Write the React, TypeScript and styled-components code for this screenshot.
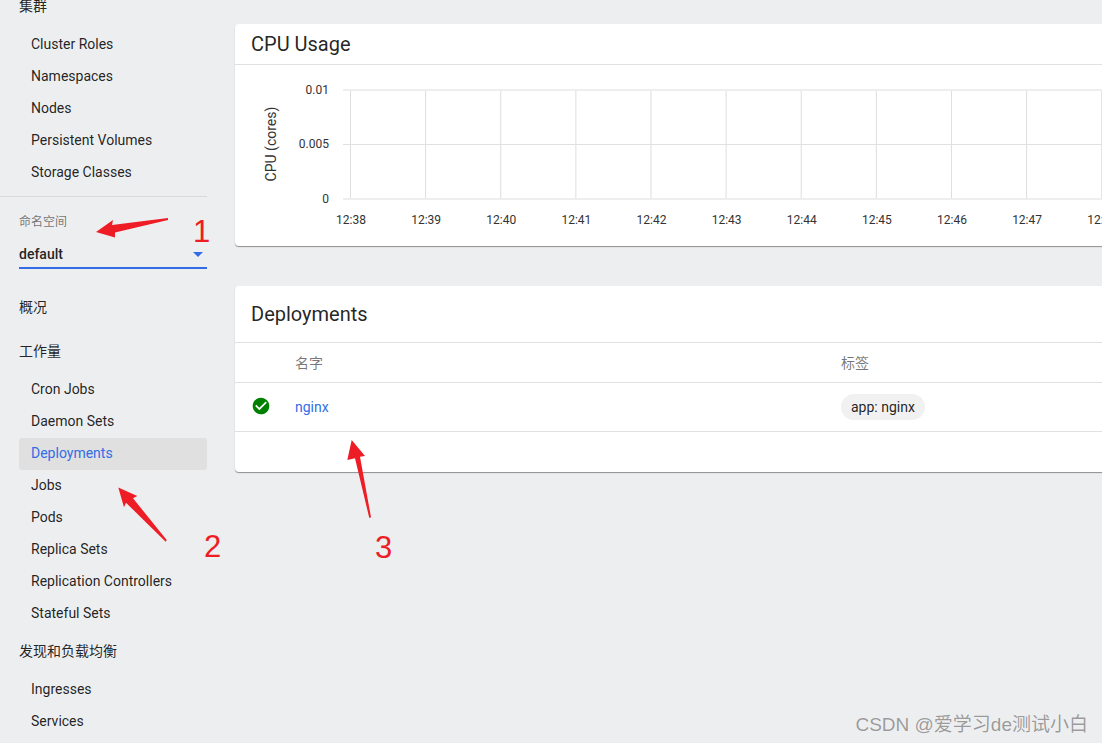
import styled, { createGlobalStyle } from "styled-components";

//style
const GlobalStyle = createGlobalStyle`
  html, body {
    margin: 0;
    height: 100%;
    overflow: hidden;
    background-color: #edeef0;
  }
  body {
    font-family: Roboto, "Noto Sans CJK SC", sans-serif;
    font-size: 14px;
    color: rgba(0, 0, 0, 0.87);
  }
`;
const Page = styled.div`
  position: relative;
  display: flex;
  width: 1102px;
  height: 743px;
  overflow: hidden;
`;
const Sidebar = styled.nav`
  flex: 0 0 207px;
  margin-top: -15px;
`;
const SectionTitle = styled.div`
  display: flex;
  align-items: center;
  height: 40px;
  padding: 0 0 4px 19px;
`;
const NavList = styled.ul`
  list-style: none;
  margin: 0;
  padding: 0 0 0 19px;
`;
const NavItem = styled.li<{ $active?: boolean }>`
  display: flex;
  align-items: center;
  height: 30px;
  padding: 0 0 2px 12px;
  border-radius: 3px;
  background-color: ${props => (props.$active ? "#e0e0e0" : "transparent")};
  color: ${props => (props.$active ? "#326de6" : "inherit")};
`;
const Divider = styled.hr`
  margin: 7px 0 0;
  border: none;
  border-top: 1px solid #d9d9d9;
`;
const NamespaceBox = styled.div`
  margin-left: 19px;
  padding-top: 17px;
`;
const NamespaceLabel = styled.div`
  font-size: 12px;
  line-height: 16px;
  color: rgba(0, 0, 0, 0.54);
`;
const NamespaceSelect = styled.div`
  display: flex;
  align-items: center;
  justify-content: space-between;
  height: 27px;
  margin-top: 10px;
  margin-bottom: 17px;
  padding-right: 4px;
  border-bottom: 2px solid #326de6;
  font-weight: 500;
`;
const Caret = styled.span`
  width: 0;
  height: 0;
  margin-top: 2px;
  border-left: 5.5px solid transparent;
  border-right: 5.5px solid transparent;
  border-top: 5.5px solid #326de6;
`;
const Main = styled.main`
  flex: 1;
  min-width: 0;
  padding: 24px 0 0 28px;
`;
const Card = styled.section`
  width: calc(100% + 8px);
  margin-bottom: 40px;
  background-color: #fff;
  border-radius: 4px;
  box-shadow: 0 1px 1px rgba(0, 0, 0, 0.4);
  overflow: hidden;
`;
const CardHeader = styled.header<{ $height: number }>`
  display: flex;
  align-items: center;
  height: ${props => props.$height}px;
  padding-left: 16px;
  font-size: 20px;
  border-bottom: 1px solid #e0e0e0;
`;
const Chart = styled.svg`
  display: block;
  font-family: Roboto, sans-serif;
  font-size: 12px;
`;
const TableRow = styled.div<{ $height: number }>`
  display: grid;
  grid-template-columns: 60px 546px 1fr;
  align-items: center;
  height: ${props => props.$height}px;
  border-bottom: 1px solid #e0e0e0;
`;
const HeadCell = styled.div`
  padding-bottom: 2px;
  color: rgba(0, 0, 0, 0.54);
`;
const StatusCell = styled.div`
  display: flex;
  padding: 0 0 2px 16px;
`;
const NameLink = styled.a`
  color: #326de6;
  text-decoration: none;
`;
const Chip = styled.span`
  display: inline-block;
  padding: 0 10px;
  height: 26px;
  line-height: 26px;
  border-radius: 13px;
  background-color: #f1f1f1;
`;
const TableFooter = styled.div`
  height: 40px;
`;
const Annotations = styled.svg`
  position: absolute;
  left: 0;
  top: 0;
  pointer-events: none;
  font-family: "Liberation Sans", sans-serif;
`;
const Watermark = styled.div`
  position: absolute;
  right: 14px;
  bottom: 7px;
  font-family: "Liberation Sans", "Noto Sans CJK SC", sans-serif;
  font-size: 19px;
  color: rgba(110, 110, 110, 0.7);
  text-shadow: 0 0 1px #fff;
`;

//data
const clusterItems = ["Cluster Roles", "Namespaces", "Nodes", "Persistent Volumes", "Storage Classes"];
const workloadItems = [
  "Cron Jobs",
  "Daemon Sets",
  "Deployments",
  "Jobs",
  "Pods",
  "Replica Sets",
  "Replication Controllers",
  "Stateful Sets",
];
const discoveryItems = ["Ingresses", "Services"];
const times = ["12:38", "12:39", "12:40", "12:41", "12:42", "12:43", "12:44", "12:45", "12:46", "12:47", "12:48"];
const yTicks = [
  { label: "0.01", y: 90, thick: true },
  { label: "0.005", y: 144.5, thick: false },
  { label: "0", y: 199, thick: true },
];

function CpuChart() {
  return (
    <Chart width={867} height={181} viewBox="235 65 867 181">
      {times.map((time, i) => {
        const x = 350.5 + i * 75.12;
        return (
          <g key={time}>
            <line x1={x} x2={x} y1={90} y2={199} stroke="#dedede" />
            <text x={x + 0.5} y={224} textAnchor="middle" fill="#333">{time}</text>
          </g>
        );
      })}
      {yTicks.map(tick => (
        <g key={tick.label}>
          <line x1={343} x2={1102} y1={tick.y} y2={tick.y} stroke={tick.thick ? "#eeeeee" : "#e0e0e0"} strokeWidth={tick.thick ? 2 : 1} />
          <text x={329} y={Math.floor(tick.y) + 4} textAnchor="end" fill="#333">{tick.label}</text>
        </g>
      ))}
      <text transform="translate(276 144) rotate(-90)" textAnchor="middle" fill="#333" fontSize={14}>CPU (cores)</text>
    </Chart>
  );
}

function App() {
  return (
    <Page>
      <GlobalStyle />
      <Sidebar>
        <SectionTitle>集群</SectionTitle>
        <NavList>
          {clusterItems.map(item => <NavItem key={item}>{item}</NavItem>)}
        </NavList>
        <Divider />
        <NamespaceBox>
          <NamespaceLabel>命名空间</NamespaceLabel>
          <NamespaceSelect>
            default
            <Caret />
          </NamespaceSelect>
        </NamespaceBox>
        <SectionTitle>概况</SectionTitle>
        <SectionTitle>工作量</SectionTitle>
        <NavList>
          {workloadItems.map(item => (
            <NavItem key={item} $active={item === "Deployments"}>{item}</NavItem>
          ))}
        </NavList>
        <SectionTitle>发现和负载均衡</SectionTitle>
        <NavList>
          {discoveryItems.map(item => <NavItem key={item}>{item}</NavItem>)}
        </NavList>
      </Sidebar>
      <Main>
        <Card>
          <CardHeader $height={40}>CPU Usage</CardHeader>
          <CpuChart />
        </Card>
        <Card>
          <CardHeader $height={56}>Deployments</CardHeader>
          <TableRow $height={39}>
            <div />
            <HeadCell>名字</HeadCell>
            <HeadCell>标签</HeadCell>
          </TableRow>
          <TableRow $height={48}>
            <StatusCell>
              <svg width="20" height="20" viewBox="0 0 24 24" fill="#008000">
                <path d="M12 2C6.48 2 2 6.48 2 12s4.48 10 10 10 10-4.48 10-10S17.52 2 12 2zm-2 15l-5-5 1.41-1.41L10 14.17l7.59-7.59L19 8l-9 9z" />
              </svg>
            </StatusCell>
            <div><NameLink href="#">nginx</NameLink></div>
            <div><Chip>app: nginx</Chip></div>
          </TableRow>
          <TableFooter />
        </Card>
      </Main>
      <Annotations width={1102} height={743} viewBox="0 0 1102 743">
        <g fill="#ee1c25">
          <polygon points="96,232 113,220 112,225 168,218 168,220 115,232.5 115,237.5" />
          <polygon points="118.3,487.5 137.3,496 133,498.3 166.7,540 165.7,541.7 126,502.7 124,507.3" />
          <polygon points="351.7,440 365,456 360,456.7 371,517.3 369.3,518 355,458.3 347.3,460" />
          <text x={193} y={242} fontSize={31}>1</text>
          <text x={204} y={557} fontSize={31}>2</text>
          <text x={375} y={558} fontSize={31}>3</text>
        </g>
      </Annotations>
      <Watermark>CSDN @爱学习de测试小白</Watermark>
    </Page>
  );
}

export default App;
